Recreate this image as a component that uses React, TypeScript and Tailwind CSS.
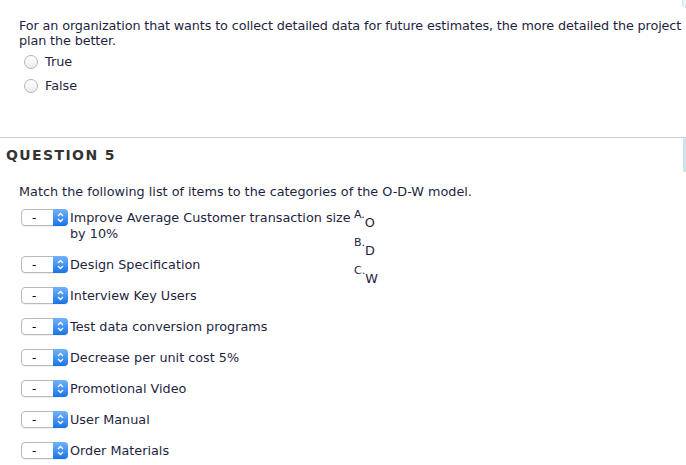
import React from "react";

const items = [
  "Improve Average Customer transaction size by 10%",
  "Design Specification",
  "Interview Key Users",
  "Test data conversion programs",
  "Decrease per unit cost 5%",
  "Promotional Video",
  "User Manual",
  "Order Materials",
];

const answers = [
  ["A.", "O"],
  ["B.", "D"],
  ["C.", "W"],
];

function Select() {
  return (
    <div className="flex h-[17px] w-[47px] shrink-0 rounded-[4px] border border-[#b9b9b9] bg-white shadow-[0_1px_0_rgba(0,0,0,0.06)]">
      <div className="flex flex-1 items-center pl-[10px] text-[12px] leading-none text-black">-</div>
      <div className="-my-px -mr-px flex w-[15px] items-center justify-center rounded-r-[4px] bg-gradient-to-b from-[#6fb3fb] to-[#1473e6]">
        <svg width="7" height="11" viewBox="0 0 7 11" fill="none">
          <path d="M1 4 L3.5 1.5 L6 4" stroke="white" strokeWidth="1.3" />
          <path d="M1 7 L3.5 9.5 L6 7" stroke="white" strokeWidth="1.3" />
        </svg>
      </div>
    </div>
  );
}

function Radio({ label }: { label: string }) {
  return (
    <div className="flex h-[16px] items-center gap-[7px] pl-[5px]">
      <div className="h-[14px] w-[14px] rounded-full border border-[#b5b5b5] bg-gradient-to-b from-white to-[#ededed]" />
      <span>{label}</span>
    </div>
  );
}

export default function App() {
  return (
    <div
      className="relative h-[465px] w-[686px] overflow-hidden bg-white text-[12.8px] leading-[16px] text-[#241f3f]"
      style={{ fontFamily: '"DejaVu Sans", sans-serif' }}
    >
      <div className="absolute right-[-6px] top-[-8px] h-[16px] w-[10px] rounded-[4px] border border-[#d5e3ea] bg-[#eef5f8]" />
      <div className="pl-[19px] pt-[18px]">
        <p className="whitespace-nowrap leading-[15px] tracking-[-0.12px]">
          For an organization that wants to collect detailed data for future estimates, the more detailed the project
          <br />
          plan the better.
        </p>
        <div className="mt-[6px] flex flex-col gap-[8px]">
          <Radio label="True" />
          <Radio label="False" />
        </div>
      </div>

      <div className="relative mt-[43px] border-t border-[#cfcfcf]">
        <div className="absolute right-0 top-0 h-[34px] w-[3px] bg-[#cfe3ea]" />
        <h2 className="pl-[6px] pt-[8px] text-[14px] font-bold leading-[18px] tracking-[1.4px] text-[#333]">QUESTION 5</h2>
        <div className="pl-[19px] pt-[20px]">
          <p>Match the following list of items to the categories of the O-D-W model.</p>
          <div className="mt-[9px] flex">
            <div className="flex w-[335px] flex-col gap-[14px] pl-[2px]">
              {items.map((t) => (
                <div key={t} className="flex items-start gap-[2px]">
                  <Select />
                  <span className="w-[285px] pt-[1px]">{t}</span>
                </div>
              ))}
            </div>
            <div className="flex flex-col gap-[10px]">
              {answers.map(([l, v]) => (
                <div key={l} className="flex h-[18px] items-start">
                  <span className="text-[11px] leading-[12px]">{l}</span>
                  <span className="pt-[7px] leading-[14px]">{v}</span>
                </div>
              ))}
            </div>
          </div>
        </div>
      </div>
    </div>
  );
}
